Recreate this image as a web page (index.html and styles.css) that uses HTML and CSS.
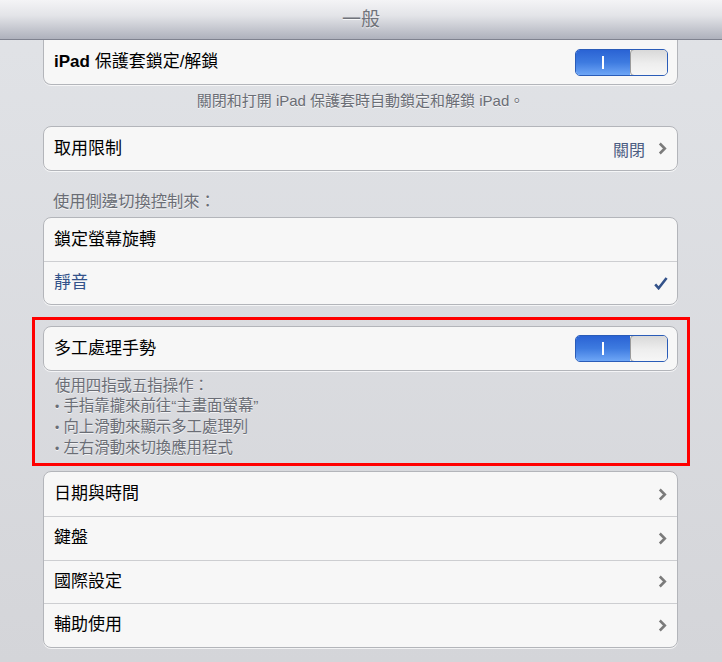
FILE: index.html
```html
<!DOCTYPE html>
<html lang="zh-Hant">
<head>
<meta charset="utf-8">
<title>一般</title>
<link rel="stylesheet" href="styles.css">
</head>
<body>
<header class="navbar"><h1 class="nav-title">一般</h1></header>
<main class="content">
  <section class="group group-cut">
    <div class="row">
      <span class="label"><b class="latin-bold">iPad</b> 保護套鎖定/解鎖</span>
      <span class="switch"><span class="switch-on"><i class="switch-bar"></i></span><span class="switch-knob"></span></span>
    </div>
  </section>
  <p class="note center">關閉和打開 iPad 保護套時自動鎖定和解鎖 iPad。</p>

  <section class="group spaced">
    <div class="row">
      <span class="label">取用限制</span>
      <span class="detail"><span class="value">關閉</span><svg class="chev" width="9" height="13" viewBox="0 0 9 13"><path d="M1.8 1.5 L6.8 6.5 L1.8 11.5" fill="none" stroke="#7b7b7b" stroke-width="2.6"/></svg></span>
    </div>
  </section>

  <p class="section-label">使用側邊切換控制來：</p>
  <section class="group">
    <div class="row"><span class="label">鎖定螢幕旋轉</span></div>
    <div class="row"><span class="label selected">靜音</span><svg class="check" width="14" height="13" viewBox="0 0 14 13"><path d="M1.2 7.4 L4.6 11.2 L12.6 1" fill="none" stroke="#33528a" stroke-width="2.6" stroke-linejoin="miter"/></svg></div>
  </section>

  <div class="highlight">
    <section class="group">
      <div class="row">
        <span class="label">多工處理手勢</span>
        <span class="switch"><span class="switch-on"><i class="switch-bar"></i></span><span class="switch-knob"></span></span>
      </div>
    </section>
    <div class="note left">
      <p>使用四指或五指操作：</p>
      <p><span class="dot">•</span> 手指靠攏來前往“主畫面螢幕”</p>
      <p><span class="dot">•</span> 向上滑動來顯示多工處理列</p>
      <p><span class="dot">•</span> 左右滑動來切換應用程式</p>
    </div>
  </div>

  <section class="group after-highlight">
    <div class="row"><span class="label">日期與時間</span><svg class="chev" width="9" height="13" viewBox="0 0 9 13"><path d="M1.8 1.5 L6.8 6.5 L1.8 11.5" fill="none" stroke="#7b7b7b" stroke-width="2.6"/></svg></div>
    <div class="row"><span class="label">鍵盤</span><svg class="chev" width="9" height="13" viewBox="0 0 9 13"><path d="M1.8 1.5 L6.8 6.5 L1.8 11.5" fill="none" stroke="#7b7b7b" stroke-width="2.6"/></svg></div>
    <div class="row"><span class="label">國際設定</span><svg class="chev" width="9" height="13" viewBox="0 0 9 13"><path d="M1.8 1.5 L6.8 6.5 L1.8 11.5" fill="none" stroke="#7b7b7b" stroke-width="2.6"/></svg></div>
    <div class="row"><span class="label">輔助使用</span><svg class="chev" width="9" height="13" viewBox="0 0 9 13"><path d="M1.8 1.5 L6.8 6.5 L1.8 11.5" fill="none" stroke="#7b7b7b" stroke-width="2.6"/></svg></div>
  </section>
</main>
</body>
</html>
```

FILE: styles.css
```css
* { box-sizing: border-box; }
html, body { margin: 0; padding: 0; }
body {
  width: 722px;
  height: 662px;
  overflow: hidden;
  font-family: "Liberation Sans", "Noto Sans CJK TC", sans-serif;
  background: linear-gradient(#e1e3e7, #d4d5d9);
  color: #000;
}
.navbar {
  height: 40px;
  background: linear-gradient(#f4f4f6 0%, #e3e4e8 40%, #aeb1bc 100%);
  border-bottom: 1px solid #7f828f;
  display: flex;
  align-items: center;
  justify-content: center;
}
.nav-title {
  margin: 0;
  font-family: "Noto Sans CJK TC", sans-serif;
  font-weight: 400;
  font-size: 19px;
  line-height: 24px;
  color: #70737b;
  text-shadow: 0 1px 0 rgba(255,255,255,0.8);
  padding-bottom: 4px;
}
.content {
  width: 635px;
  margin-left: 43px;
}
.group {
  background: #f7f7f7;
  border: 1px solid #b3b5ba;
  border-radius: 8px;
  box-shadow: 0 1px 0 rgba(255,255,255,0.7);
}
.group-cut {
  border-top: none;
  border-radius: 0 0 8px 8px;
}
.row {
  height: 43px;
  display: flex;
  align-items: center;
  justify-content: space-between;
  padding: 0 9px 0 10px;
  border-top: 1px solid #cdced1;
}
.row:first-child { border-top: none; }
.group-cut .row { height: 44px; }
.label {
  font-family: "Liberation Sans", "Noto Sans CJK TC", sans-serif;
  font-size: 17px;
  font-weight: 400;
  line-height: 22px;
  color: #000;
}
.latin-bold { font-weight: 700; }
.label.selected { color: #33528a; font-weight: 400; }
.detail { display: flex; align-items: center; gap: 13px; }
.value {
  font-family: "Noto Sans CJK TC", sans-serif;
  font-size: 16px;
  color: #4b5d82;
}
.chev { display: block; margin-right: 1px; }
.check { display: block; margin-right: 0; }
.switch {
  display: flex;
  width: 93px;
  height: 27px;
  border-radius: 5px;
  overflow: hidden;
  border: 1px solid #2a5cb8;
}
.switch-on {
  width: 54px;
  background: linear-gradient(#2a63d4, #3e7be0 50%, #6ea6f6);
  display: flex;
  align-items: center;
  justify-content: center;
}
.switch-bar {
  display: block;
  width: 2px;
  height: 13px;
  background: #fff;
}
.switch-knob {
  flex: 1;
  background: linear-gradient(#d9d9d9, #eeeeee 55%, #f6f6f6);
  border: 1px solid #9a9a9a;
  border-radius: 4px;
  margin: -1px -1px -1px 0;
}
.note {
  margin: 0;
  font-family: "Liberation Sans", "Noto Sans CJK TC", sans-serif;
  font-size: 15px;
  color: #6a6d75;
  text-shadow: 0 1px 0 rgba(255,255,255,0.7);
}
.note.center {
  text-align: center;
  line-height: 20px;
  margin-top: 6px;
}
.spaced { margin-top: 15px; }
.section-label {
  margin: 19px 0 7px 10px;
  font-family: "Noto Sans CJK TC", sans-serif;
  font-size: 16.3px;
  line-height: 20px;
  color: #6a6d75;
  text-shadow: 0 1px 0 rgba(255,255,255,0.7);
}
.highlight {
  margin: 12px -12px 0 -11px;
  border: 3px solid #ff0000;
  padding: 6px 9px 4px 8px;
}
.note.left {
  padding: 5px 0 0 12px;
  font-size: 15.4px;
  line-height: 20px;
}
.note.left p { margin: 0; }
.dot { font-family: "Liberation Sans", sans-serif; font-size: 12px; }
.after-highlight { margin-top: 5px; }
.after-highlight .row { height: 43.5px; }
.after-highlight .row:first-child { height: 44px; }
```
